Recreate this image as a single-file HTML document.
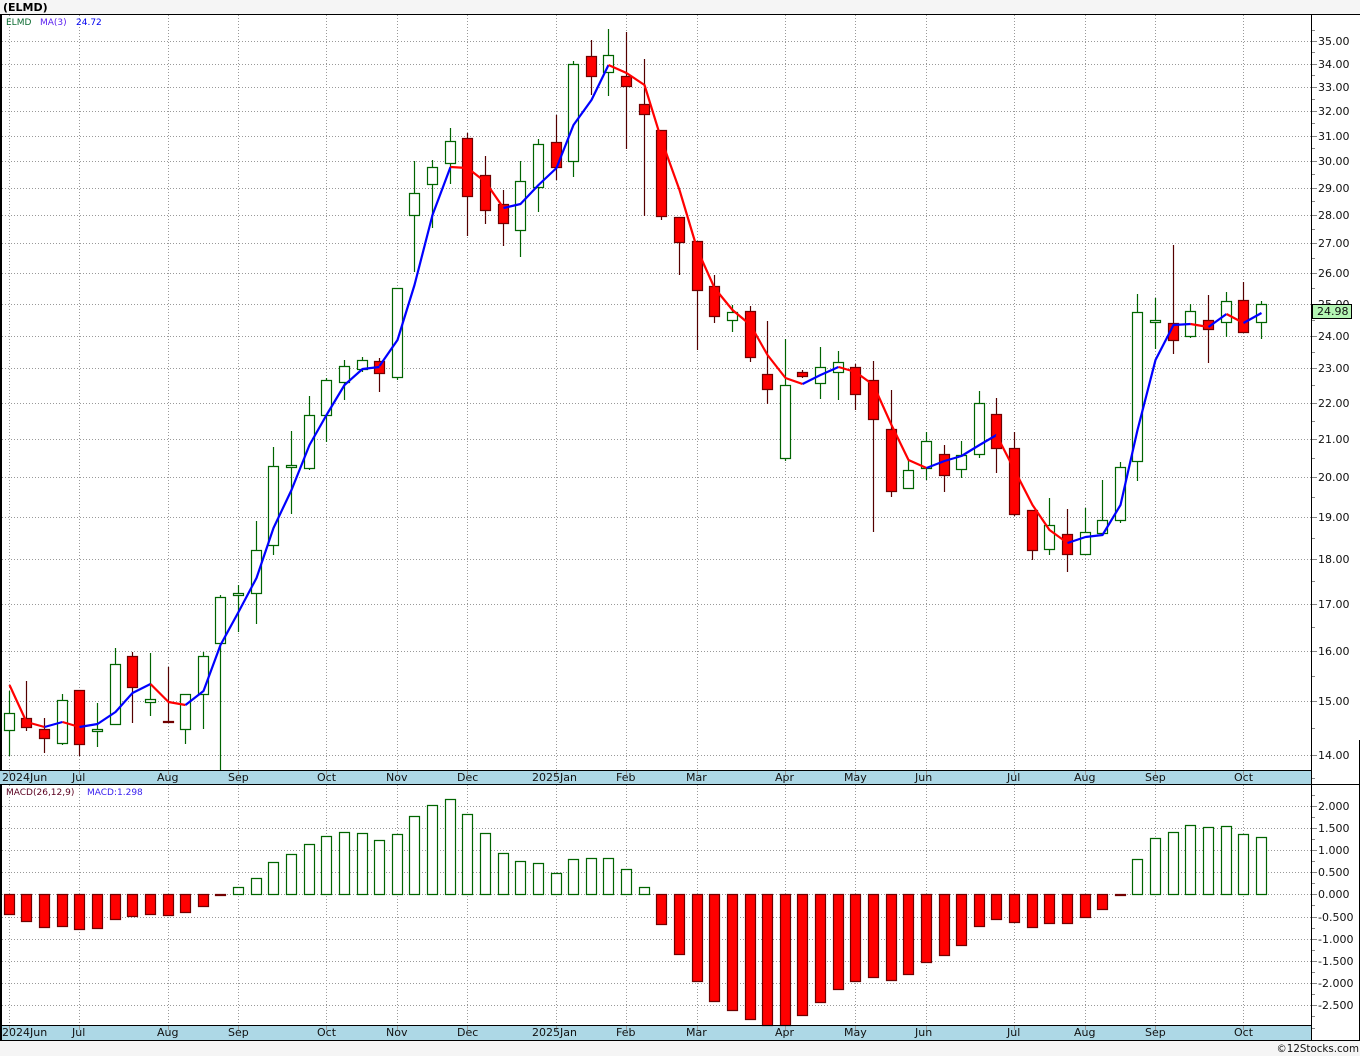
<!DOCTYPE html>
<html><head><meta charset="utf-8"><title>ELMD</title>
<style>
html,body{margin:0;padding:0;background:#f5f5f5}
svg{display:block}
text{font-family:"DejaVu Sans","Liberation Sans",sans-serif;font-size:11px;fill:#111}
.s{font-size:9px}
</style></head><body>
<svg xmlns="http://www.w3.org/2000/svg" width="1360" height="1056" viewBox="0 0 1360 1056">
<rect width="1360" height="1056" fill="#f5f5f5"/>
<rect x="0" y="14" width="1360" height="1026" fill="#fff"/>
<rect x="0" y="770" width="1311" height="14" fill="#add8e6"/>
<rect x="0" y="1025" width="1311" height="15" fill="#add8e6"/>
<g shape-rendering="crispEdges" fill="none">
<path stroke="#999" stroke-dasharray="1 2" d="M9.5 15V770M79.5 15V770M168.5 15V770M238.5 15V770M326.5 15V770M397.5 15V770M467.5 15V770M556.5 15V770M626.5 15V770M697.5 15V770M785.5 15V770M855.5 15V770M926.5 15V770M1014.5 15V770M1085.5 15V770M1155.5 15V770M1243.5 15V770M9.5 785V1025M79.5 785V1025M168.5 785V1025M238.5 785V1025M326.5 785V1025M397.5 785V1025M467.5 785V1025M556.5 785V1025M626.5 785V1025M697.5 785V1025M785.5 785V1025M855.5 785V1025M926.5 785V1025M1014.5 785V1025M1085.5 785V1025M1155.5 785V1025M1243.5 785V1025M2 41.5H1311M2 64.5H1311M2 87.5H1311M2 111.5H1311M2 136.5H1311M2 161.5H1311M2 188.5H1311M2 215.5H1311M2 243.5H1311M2 273.5H1311M2 304.5H1311M2 336.5H1311M2 368.5H1311M2 403.5H1311M2 439.5H1311M2 477.5H1311M2 517.5H1311M2 559.5H1311M2 604.5H1311M2 651.5H1311M2 701.5H1311M2 755.5H1311M2 806.5H1311M2 828.5H1311M2 850.5H1311M2 872.5H1311M2 894.5H1311M2 917.5H1311M2 939.5H1311M2 961.5H1311M2 983.5H1311M2 1005.5H1311"/>
<path stroke="#999" d="M9.5 771V775M79.5 771V775M168.5 771V775M238.5 771V775M326.5 771V775M397.5 771V775M467.5 771V775M556.5 771V775M626.5 771V775M697.5 771V775M785.5 771V775M855.5 771V775M926.5 771V775M1014.5 771V775M1085.5 771V775M1155.5 771V775M1243.5 771V775M9.5 1026V1030M79.5 1026V1030M168.5 1026V1030M238.5 1026V1030M326.5 1026V1030M397.5 1026V1030M467.5 1026V1030M556.5 1026V1030M626.5 1026V1030M697.5 1026V1030M785.5 1026V1030M855.5 1026V1030M926.5 1026V1030M1014.5 1026V1030M1085.5 1026V1030M1155.5 1026V1030M1243.5 1026V1030"/>
<path stroke="#888" d="M1312 41.5H1317M1312 64.5H1317M1312 87.5H1317M1312 111.5H1317M1312 136.5H1317M1312 161.5H1317M1312 188.5H1317M1312 215.5H1317M1312 243.5H1317M1312 273.5H1317M1312 304.5H1317M1312 336.5H1317M1312 368.5H1317M1312 403.5H1317M1312 439.5H1317M1312 477.5H1317M1312 517.5H1317M1312 559.5H1317M1312 604.5H1317M1312 651.5H1317M1312 701.5H1317M1312 755.5H1317M1312 806.5H1317M1312 828.5H1317M1312 850.5H1317M1312 872.5H1317M1312 894.5H1317M1312 917.5H1317M1312 939.5H1317M1312 961.5H1317M1312 983.5H1317M1312 1005.5H1317M1312 30.5H1315M1312 52.5H1315M1312 75.5H1315M1312 99.5H1315M1312 123.5H1315M1312 148.5H1315M1312 174.5H1315M1312 201.5H1315M1312 229.5H1315M1312 258.5H1315M1312 288.5H1315M1312 320.5H1315M1312 352.5H1315M1312 385.5H1315M1312 421.5H1315M1312 458.5H1315M1312 497.5H1315M1312 538.5H1315M1312 581.5H1315M1312 627.5H1315M1312 676.5H1315M1312 728.5H1315M1312 778.5H1315M1312 795.5H1315M1312 817.5H1315M1312 839.5H1315M1312 861.5H1315M1312 883.5H1315M1312 905.5H1315M1312 928.5H1315M1312 950.5H1315M1312 972.5H1315M1312 994.5H1315M1312 1016.5H1315M1312 1028.5H1315"/>
</g>
<g fill="none" stroke-width="1.2">
<!-- green candles -->
<path stroke="#006400" d="M9.5 691V756M62.5 694V745M97.5 703V747M115.5 648V724M150.5 653V716M185.5 694V744M203.5 652V729M220.5 595V770M238.5 585V632M256.5 521V624M273.5 447V555M291.5 431V514M309.5 396V470M326.5 378V442M344.5 360V400M362.5 357V372M397.5 288V380M414.5 161V272M432.5 160V228M450.5 128V184M520.5 161V257M538.5 139V212M573.5 61V177M608.5 29V96M732.5 305V332M785.5 339V461M820.5 347V399M838.5 351V400M908.5 460V489M926.5 432V480M961.5 441V478M979.5 391V458M1049.5 498V555M1085.5 508V555M1102.5 480V535M1120.5 462V523M1137.5 294V481M1155.5 298V349M1190.5 304V338M1226.5 292V337M1261.5 301V339"/>
<path stroke="#006400" fill="#fff" d="M4.5 713.5h10v17h-10zM57.5 700.5h10v43h-10zM92.5 729.5h10v2h-10zM110.5 664.5h10v60h-10zM145.5 699.5h10v3h-10zM180.5 694.5h10v35h-10zM198.5 656.5h10v38h-10zM215.5 597.5h10v46h-10zM233.5 593.5h10v2h-10zM251.5 550.5h10v43h-10zM268.5 466.5h10v79h-10zM286.5 465.5h10v2h-10zM304.5 415.5h10v53h-10zM321.5 380.5h10v35h-10zM339.5 366.5h10v16h-10zM357.5 360.5h10v9h-10zM392.5 288.5h10v89h-10zM409.5 193.5h10v22h-10zM427.5 167.5h10v17h-10zM445.5 141.5h10v22h-10zM515.5 181.5h10v49h-10zM533.5 144.5h10v43h-10zM568.5 64.5h10v97h-10zM603.5 55.5h10v17h-10zM727.5 312.5h10v8h-10zM780.5 385.5h10v73h-10zM815.5 367.5h10v16h-10zM833.5 362.5h10v10h-10zM903.5 470.5h10v18h-10zM921.5 441.5h10v27h-10zM956.5 455.5h10v14h-10zM974.5 403.5h10v51h-10zM1044.5 525.5h10v24h-10zM1080.5 532.5h10v22h-10zM1097.5 520.5h10v13h-10zM1115.5 467.5h10v53h-10zM1132.5 312.5h10v149h-10zM1150.5 320.5h10v2h-10zM1185.5 311.5h10v25h-10zM1221.5 301.5h10v21h-10zM1256.5 304.5h10v18h-10z"/>
<!-- red candles -->
<path stroke="#550000" d="M26.5 681V731M44.5 718V753M79.5 690V756M132.5 652V723M168.5 667V722M379.5 358V392M467.5 133V236M485.5 156V224M503.5 190V246M556.5 115V180M591.5 40V95M626.5 32V149M644.5 59V216M661.5 130V220M679.5 217V275M697.5 241V350M714.5 275V323M750.5 306V362M767.5 321V404M802.5 370V378M855.5 364V410M873.5 361V532M891.5 390V497M944.5 445V492M996.5 398V473M1014.5 432V516M1032.5 510V560M1067.5 509V572M1173.5 245V354M1208.5 295V363M1243.5 282V333"/>
<path stroke="#700000" fill="#f00" d="M21.5 718.5h10v9h-10zM39.5 729.5h10v9h-10zM74.5 690.5h10v54h-10zM127.5 656.5h10v31h-10zM163.5 721.5h10v1h-10zM374.5 361.5h10v12h-10zM462.5 138.5h10v58h-10zM480.5 175.5h10v35h-10zM498.5 204.5h10v19h-10zM551.5 142.5h10v25h-10zM586.5 56.5h10v20h-10zM621.5 76.5h10v10h-10zM639.5 104.5h10v10h-10zM656.5 130.5h10v86h-10zM674.5 217.5h10v25h-10zM692.5 241.5h10v49h-10zM709.5 286.5h10v30h-10zM745.5 311.5h10v46h-10zM762.5 374.5h10v15h-10zM797.5 372.5h10v4h-10zM850.5 367.5h10v27h-10zM868.5 380.5h10v39h-10zM886.5 429.5h10v62h-10zM939.5 454.5h10v21h-10zM991.5 414.5h10v34h-10zM1009.5 448.5h10v66h-10zM1027.5 510.5h10v40h-10zM1062.5 534.5h10v20h-10zM1168.5 323.5h10v17h-10zM1203.5 320.5h10v9h-10zM1238.5 300.5h10v32h-10z"/>
<!-- MACD green -->
<path stroke="#006400" fill="#fff" d="M233.5 887.5h10v7h-10zM251.5 878.5h10v16h-10zM268.5 862.5h10v32h-10zM286.5 854.5h10v40h-10zM304.5 844.5h10v50h-10zM321.5 836.5h10v58h-10zM339.5 832.5h10v62h-10zM357.5 833.5h10v61h-10zM374.5 840.5h10v54h-10zM392.5 834.5h10v60h-10zM409.5 816.5h10v78h-10zM427.5 805.5h10v89h-10zM445.5 799.5h10v95h-10zM462.5 814.5h10v80h-10zM480.5 833.5h10v61h-10zM498.5 853.5h10v41h-10zM515.5 861.5h10v33h-10zM533.5 863.5h10v31h-10zM551.5 873.5h10v21h-10zM568.5 859.5h10v35h-10zM586.5 858.5h10v36h-10zM603.5 858.5h10v36h-10zM621.5 869.5h10v25h-10zM639.5 887.5h10v7h-10zM1132.5 859.5h10v35h-10zM1150.5 838.5h10v56h-10zM1168.5 832.5h10v62h-10zM1185.5 825.5h10v69h-10zM1203.5 827.5h10v67h-10zM1221.5 826.5h10v68h-10zM1238.5 834.5h10v60h-10zM1256.5 837.5h10v57h-10z"/>
<!-- MACD red -->
<path stroke="#700000" fill="#f00" d="M4.5 894.5h10v20h-10zM21.5 894.5h10v27h-10zM39.5 894.5h10v33h-10zM57.5 894.5h10v32h-10zM74.5 894.5h10v35h-10zM92.5 894.5h10v34h-10zM110.5 894.5h10v25h-10zM127.5 894.5h10v22h-10zM145.5 894.5h10v20h-10zM163.5 894.5h10v21h-10zM180.5 894.5h10v18h-10zM198.5 894.5h10v12h-10zM215.5 894.5h10v1h-10zM656.5 894.5h10v30h-10zM674.5 894.5h10v60h-10zM692.5 894.5h10v87h-10zM709.5 894.5h10v107h-10zM727.5 894.5h10v116h-10zM745.5 894.5h10v125h-10zM762.5 894.5h10v131h-10zM780.5 894.5h10v131h-10zM797.5 894.5h10v121h-10zM815.5 894.5h10v108h-10zM833.5 894.5h10v95h-10zM850.5 894.5h10v87h-10zM868.5 894.5h10v83h-10zM886.5 894.5h10v86h-10zM903.5 894.5h10v80h-10zM921.5 894.5h10v68h-10zM939.5 894.5h10v61h-10zM956.5 894.5h10v51h-10zM974.5 894.5h10v32h-10zM991.5 894.5h10v25h-10zM1009.5 894.5h10v28h-10zM1027.5 894.5h10v33h-10zM1044.5 894.5h10v29h-10zM1062.5 894.5h10v29h-10zM1080.5 894.5h10v23h-10zM1097.5 894.5h10v15h-10zM1115.5 894.5h10v1h-10z"/>
</g>
<!-- frame -->
<path shape-rendering="crispEdges" fill="#000" d="M0 14H1360V15H0zM0 14H2V770H0zM0 784H2V1040H0zM1311 14H1312V1040H1311zM0 770H1312V771H0zM0 784H1360V785H0zM0 1025H1312V1026H0zM0 1040H1360V1041H0zM1359 740H1360V1040H1359z"/>
<!-- moving average -->
<g fill="none" stroke-width="2.2" stroke-linejoin="round" stroke-linecap="butt">
<polyline stroke="#f00" points="9.5,685 26.5,722 44.5,727"/>
<polyline stroke="#00f" points="44.5,727 62.5,722"/>
<polyline stroke="#f00" points="62.5,722 79.5,727"/>
<polyline stroke="#00f" points="79.5,727 97.5,724 115.5,712 132.5,693 150.5,684"/>
<polyline stroke="#f00" points="150.5,684 168.5,702 185.5,705"/>
<polyline stroke="#00f" points="185.5,705 203.5,691 220.5,645 238.5,612 256.5,578 273.5,528 291.5,490 309.5,445 326.5,415 344.5,385 362.5,369 379.5,367"/>
<polyline stroke="#00f" points="379.5,366 397.5,340 414.5,285 432.5,215 450.5,167"/>
<polyline stroke="#f00" points="450.5,167 467.5,168 485.5,182 503.5,208"/>
<polyline stroke="#00f" points="503.5,208 520.5,204 538.5,185 556.5,168 573.5,125 591.5,100 608.5,65"/>
<polyline stroke="#f00" points="608.5,65 626.5,73 644.5,85 661.5,140 679.5,190 697.5,250 714.5,288 732.5,310 750.5,325 767.5,355 785.5,378 802.5,384"/>
<polyline stroke="#00f" points="802.5,384 820.5,375 838.5,367"/>
<polyline stroke="#f00" points="838.5,367 855.5,372 873.5,385 891.5,425 908.5,460 926.5,468"/>
<polyline stroke="#00f" points="926.5,468 944.5,461 961.5,456 979.5,445 996.5,435"/>
<polyline stroke="#f00" points="996.5,435 1014.5,470 1032.5,505 1049.5,530 1067.5,543"/>
<polyline stroke="#00f" points="1067.5,543 1085.5,537 1102.5,535 1120.5,505 1137.5,430 1155.5,360 1173.5,325 1190.5,324"/>
<polyline stroke="#f00" points="1190.5,324 1208.5,327"/>
<polyline stroke="#00f" points="1208.5,327 1226.5,314"/>
<polyline stroke="#f00" points="1226.5,314 1243.5,323"/>
<polyline stroke="#00f" points="1243.5,323 1261.5,313"/>
</g>
<!-- texts -->
<text x="3" y="11" style="font-size:11px;font-weight:bold;fill:#000">(ELMD)</text>
<text x="6" y="25" class="s" style="fill:#0a6a30">ELMD</text>
<text x="40" y="25" class="s" style="fill:#5a20f0">MA(3)</text>
<text x="76" y="25" class="s" style="fill:#0000f0">24.72</text>
<text x="6" y="795" class="s" style="fill:#5a0020">MACD(26,12,9)</text>
<text x="87" y="795" class="s" style="fill:#3a20f0">MACD:1.298</text>
<g>
<text x="2" y="781">2024Jun</text><text x="72" y="781">Jul</text><text x="157" y="781">Aug</text><text x="228" y="781">Sep</text><text x="317" y="781">Oct</text><text x="386" y="781">Nov</text><text x="457" y="781">Dec</text><text x="532" y="781">2025Jan</text><text x="616" y="781">Feb</text><text x="686" y="781">Mar</text><text x="775" y="781">Apr</text><text x="844" y="781">May</text><text x="915" y="781">Jun</text><text x="1007" y="781">Jul</text><text x="1074" y="781">Aug</text><text x="1145" y="781">Sep</text><text x="1234" y="781">Oct</text>
<text x="2" y="1036">2024Jun</text><text x="72" y="1036">Jul</text><text x="157" y="1036">Aug</text><text x="228" y="1036">Sep</text><text x="317" y="1036">Oct</text><text x="386" y="1036">Nov</text><text x="457" y="1036">Dec</text><text x="532" y="1036">2025Jan</text><text x="616" y="1036">Feb</text><text x="686" y="1036">Mar</text><text x="775" y="1036">Apr</text><text x="844" y="1036">May</text><text x="915" y="1036">Jun</text><text x="1007" y="1036">Jul</text><text x="1074" y="1036">Aug</text><text x="1145" y="1036">Sep</text><text x="1234" y="1036">Oct</text>
</g>
<g>
<text x="1318" y="45">35.00</text><text x="1318" y="68">34.00</text><text x="1318" y="91">33.00</text><text x="1318" y="115">32.00</text><text x="1318" y="140">31.00</text><text x="1318" y="165">30.00</text><text x="1318" y="192">29.00</text><text x="1318" y="219">28.00</text><text x="1318" y="247">27.00</text><text x="1318" y="277">26.00</text><text x="1318" y="308">25.00</text><text x="1318" y="340">24.00</text><text x="1318" y="372">23.00</text><text x="1318" y="407">22.00</text><text x="1318" y="443">21.00</text><text x="1318" y="481">20.00</text><text x="1318" y="521">19.00</text><text x="1318" y="563">18.00</text><text x="1318" y="608">17.00</text><text x="1318" y="655">16.00</text><text x="1318" y="705">15.00</text><text x="1318" y="759">14.00</text>
<text x="1318" y="810">2.000</text><text x="1318" y="832">1.500</text><text x="1318" y="854">1.000</text><text x="1318" y="876">0.500</text><text x="1318" y="898">0.000</text><text x="1318" y="921">-0.500</text><text x="1318" y="943">-1.000</text><text x="1318" y="965">-1.500</text><text x="1318" y="987">-2.000</text><text x="1318" y="1009">-2.500</text>
</g>
<rect x="1312.5" y="304.5" width="39" height="14" fill="#b4f5b4" stroke="#000" shape-rendering="crispEdges"/>
<text x="1317" y="315">24.98</text>
<text x="1359" y="1052" text-anchor="end" style="font-size:10.3px">©12Stocks.com</text>
</svg>
</body></html>
